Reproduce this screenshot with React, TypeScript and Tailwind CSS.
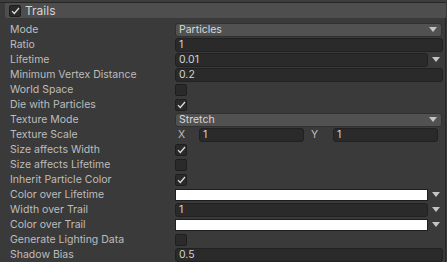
import React from 'react';

type Row =
  | { label: string; kind: 'dropdown'; value: string }
  | { label: string; kind: 'field'; value: string; arrow?: boolean }
  | { label: string; kind: 'check'; checked: boolean }
  | { label: string; kind: 'color' }
  | { label: string; kind: 'xy'; x: string; y: string };

const rows: Row[] = [
  { label: 'Mode', kind: 'dropdown', value: 'Particles' },
  { label: 'Ratio', kind: 'field', value: '1' },
  { label: 'Lifetime', kind: 'field', value: '0.01', arrow: true },
  { label: 'Minimum Vertex Distance', kind: 'field', value: '0.2' },
  { label: 'World Space', kind: 'check', checked: false },
  { label: 'Die with Particles', kind: 'check', checked: true },
  { label: 'Texture Mode', kind: 'dropdown', value: 'Stretch' },
  { label: 'Texture Scale', kind: 'xy', x: '1', y: '1' },
  { label: 'Size affects Width', kind: 'check', checked: true },
  { label: 'Size affects Lifetime', kind: 'check', checked: false },
  { label: 'Inherit Particle Color', kind: 'check', checked: true },
  { label: 'Color over Lifetime', kind: 'color' },
  { label: 'Width over Trail', kind: 'field', value: '1', arrow: true },
  { label: 'Color over Trail', kind: 'color' },
  { label: 'Generate Lighting Data', kind: 'check', checked: false },
  { label: 'Shadow Bias', kind: 'field', value: '0.5' },
];

const Arrow = () => (
  <svg width="8" height="5" viewBox="0 0 8 5" className="shrink-0">
    <path d="M0 0h8L4 5z" fill="#c4c4c4" />
  </svg>
);

const Check = ({ checked }: { checked: boolean }) => (
  <div className="w-[12px] h-[12px] rounded-[2px] bg-[#2a2a2a] border border-[#1e1e1e] flex items-center justify-center">
    {checked && (
      <svg width="9" height="8" viewBox="0 0 9 8">
        <path d="M1 4.2l2.3 2.3L8 1" stroke="#e2e2e2" strokeWidth="1.2" fill="none" />
      </svg>
    )}
  </div>
);

const Field = ({ value, className = '' }: { value: string; className?: string }) => (
  <div className={`h-[14px] bg-[#2a2a2a] border border-[#212121] rounded-[3px] flex items-center px-[3px] pt-[1px] text-[#d2d2d2] ${className}`}>
    {value}
  </div>
);

const Control = ({ row }: { row: Row }) => {
  switch (row.kind) {
    case 'dropdown':
      return (
        <div className="w-[267px] h-[14px] bg-[#515151] border border-[#303030] rounded-[3px] flex items-center justify-between pl-[3px] pr-[4px] text-[#d8d8d8]">
          <span className="pt-[1px]">{row.value}</span>
          <Arrow />
        </div>
      );
    case 'field':
      return row.arrow ? (
        <div className="flex items-center">
          <Field value={row.value} className="w-[253px]" />
          <div className="ml-[4px]"><Arrow /></div>
        </div>
      ) : (
        <Field value={row.value} className="w-[268px]" />
      );
    case 'check':
      return <Check checked={row.checked} />;
    case 'color':
      return (
        <div className="flex items-center">
          <div className="w-[253px] h-[12px] bg-white border border-[#1e1e1e]" />
          <div className="ml-[4px]"><Arrow /></div>
        </div>
      );
    case 'xy':
      return (
        <div className="flex items-center text-[#bdbdbd]">
          <span className="w-[24px] pl-[3px] pt-[1px]">X</span>
          <Field value={row.x} className="w-[105px]" />
          <span className="w-[29px] pl-[7px] pt-[1px]">Y</span>
          <Field value={row.y} className="w-[105px]" />
        </div>
      );
  }
};

export default function App() {
  return (
    <div
      className="w-[447px] h-[262px] bg-[#3a3a3a] overflow-hidden text-[10.5px] leading-none"
      style={{ fontFamily: 'Inter, "Noto Sans", sans-serif' }}
    >
      <div className="h-[3px] border-b border-[#262626] bg-[#3d3d3d] mr-[1px]" />
      <div className="ml-[5px] mr-[1px] h-[15px] bg-[#4e4e4e] rounded-b-[2px] flex items-center pl-[4px]">
        <Check checked={true} />
        <span className="ml-[4px] pt-[1px] text-[12px] text-[#d4d4d4]">Trails</span>
      </div>
      <div className="ml-[5px] mr-[1px] border-r border-[#262626] pt-[4px] pl-[5px] h-[244px]">
        {rows.map((row) => (
          <div key={row.label} className="h-[15px] flex items-center">
            <div className="w-[165px] pt-[1px] text-[#bdbdbd] whitespace-nowrap">{row.label}</div>
            <Control row={row} />
          </div>
        ))}
      </div>
    </div>
  );
}
